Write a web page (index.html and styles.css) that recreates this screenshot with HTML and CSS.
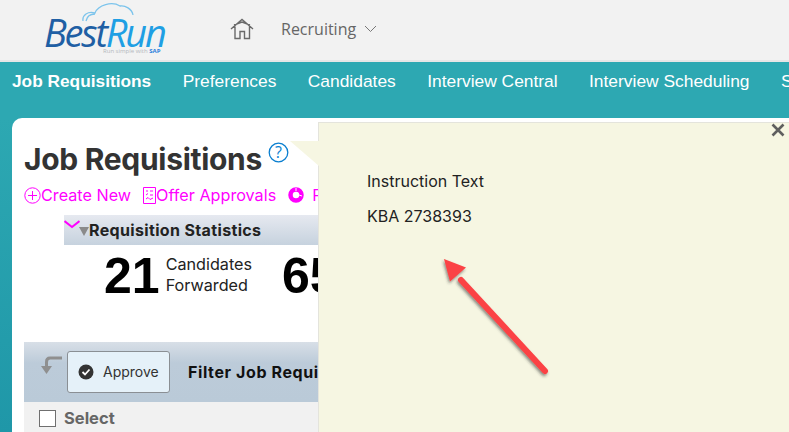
FILE: index.html
```html
<!DOCTYPE html>
<html lang="en">
<head>
<meta charset="utf-8">
<title>Job Requisitions</title>
<link rel="stylesheet" href="styles.css">
</head>
<body>
<header class="topbar">
  <div class="logo">
    <svg class="logo-cloud" width="64" height="24" viewBox="0 0 64 24"><path d="M1 20C0 14 6 10 13 12C16 4 30 0 38 5C43 4 50 8 51 14M4 20C5 15 8 13 13 13" fill="none" stroke="#7cc4ec" stroke-width="1.300"/></svg>
    <span class="logo-word"><span class="logo-best">Best</span><span class="logo-run">Run</span></span>
    <span class="logo-tag">Run simple with <b class="logo-sap">SAP</b></span>
  </div>
  <svg class="home" width="24" height="22" viewBox="0 0 24 22"><path d="M1 11L12 1.500L23 11M5 8.500V20.500H10V13.500H14.500V20.500H19.500V8.500M4 7L12 4L20 7" fill="none" stroke="#6a6a6a" stroke-width="1.400"/></svg>
  <span class="module">Recruiting</span>
  <svg class="chev" width="13" height="8" viewBox="0 0 13 8"><path d="M1 1L6.500 6.500L12 1" fill="none" stroke="#777" stroke-width="1"/></svg>
</header>
<nav class="tabs">
  <span class="tab tab-active">Job Requisitions</span>
  <span class="tab">Preferences</span>
  <span class="tab">Candidates</span>
  <span class="tab">Interview Central</span>
  <span class="tab">Interview Scheduling</span>
  <span class="tab">Settings</span>
</nav>
<main class="stage">
  <section class="card">
    <div class="title-row">
      <h1 class="title">Job Requisitions</h1>
      <svg class="help" width="21" height="21" viewBox="0 0 21 21"><circle cx="10.500" cy="10.500" r="9.300" fill="none" stroke="#0a7fd0" stroke-width="1.300"/><text x="10.500" y="15.500" text-anchor="middle" class="help-q">?</text></svg>
    </div>
    <div class="actions">
      <span class="action"><svg class="action-plus" width="17" height="17" viewBox="0 0 17 17"><circle cx="8.500" cy="8.500" r="7.700" fill="none" stroke="#f0f" stroke-width="1"/><path d="M8.500 4V13M4 8.500H13" stroke="#f0f" stroke-width="1"/></svg>Create New</span>
      <span class="action"><svg class="action-offer" width="13" height="17" viewBox="0 0 13 17"><path d="M.5 .5H12.500V16.500H.5ZM3 4H5M7 4H10M3 8L5 6.500M7 8H10M3 12L5 10.500L7 12.500L10 11" fill="none" stroke="#f0f" stroke-width="1"/></svg>Offer Approvals</span>
      <span class="action action-third"><svg width="16" height="16" viewBox="0 0 16 16"><circle cx="8" cy="8" r="5.500" fill="none" stroke="#f0f" stroke-width="4.500"/><path d="M8 1V4M14 9L11 8" stroke="#fff" stroke-width="1"/></svg>Position</span>
    </div>
    <div class="stats-head">
      <svg class="stats-chev" width="16" height="9" viewBox="0 0 16 9"><path d="M.5 1L8 7L15.500 1" fill="none" stroke="#f0f" stroke-width="2"/></svg>
      <span class="stats-tri"></span>
      <span class="stats-label">Requisition Statistics</span>
    </div>
    <div class="stats">
      <div class="stat">
        <span class="stat-num">21</span>
        <span class="stat-text">Candidates<br>Forwarded</span>
      </div>
      <div class="stat">
        <span class="stat-num">65</span>
        <span class="stat-text">Candidates<br>Hired</span>
      </div>
    </div>
    <div class="toolbar">
      <svg class="back" width="22" height="20" viewBox="0 0 22 20"><path d="M21 2H9C6.500 2 5.500 3.500 5.500 6V11" fill="none" stroke="#8f8f8f" stroke-width="3"/><path d="M0 10H11L5.500 18Z" fill="#8f8f8f"/></svg>
      <button class="approve" type="button">
        <svg width="16" height="16" viewBox="0 0 16 16"><circle cx="8" cy="8" r="7.500" fill="#333"/><path d="M4.500 8L7 10.500L11.500 5.500" fill="none" stroke="#fff" stroke-width="1.800"/></svg>
        Approve
      </button>
      <span class="filter">Filter Job Requisitions</span>
    </div>
    <div class="select-row">
      <span class="checkbox"></span>
      <span class="select-label">Select</span>
    </div>
  </section>
  <aside class="popup">
    <span class="popup-tail"></span>
    <svg class="popup-close" width="14" height="14" viewBox="0 0 14 14"><path d="M1.500 1.500L12.500 12.500M12.500 1.500L1.500 12.500" stroke="#5f5f5f" stroke-width="2.600"/></svg>
    <p class="popup-text">Instruction Text</p>
    <p class="popup-text">KBA 2738393</p>
    <svg class="arrow" width="120" height="130" viewBox="0 0 120 130">
      <defs><filter id="shadow" x="-20%" y="-20%" width="140%" height="140%"><feDropShadow dx="-1" dy="2" stdDeviation="1.800" flood-color="#333" flood-opacity=".55"/></filter></defs>
      <g filter="url(#shadow)">
        <path d="M20 21L104 112" stroke="#fb4245" stroke-width="6" stroke-linecap="round" fill="none"/>
        <path d="M3 0L25 8.500L9 22.500Z" fill="#fb4245"/>
      </g>
    </svg>
  </aside>
</main>
</body>
</html>
```
FILE: styles.css
```css
* { box-sizing: border-box; }
html, body { margin: 0; height: 100%; }
body {
  width: 789px;
  height: 432px;
  overflow: hidden;
  background: #fff;
  font-family: "Liberation Sans", Arial, sans-serif;
}
.topbar {
  height: 62px;
  display: flex;
  align-items: center;
  padding: 0 0 2px 45px;
  background: #f2f2f2;
  border-bottom: 2px solid #e6e6e6;
}
.logo { position: relative; width: 120px; height: 56px; flex: none; }
.logo-cloud { position: absolute; left: 37px; top: 0; }
.logo-word {
  position: absolute;
  left: -1px;
  top: 16px;
  display: flex;
  font: italic 400 38px/30px "Open Sans", sans-serif;
  letter-spacing: -2.200px;
  white-space: nowrap;
}
.logo-best { display: block; color: #1f5fa4; }
.logo-run { display: block; color: #1f9fe4; }
.logo-tag {
  position: absolute;
  left: 58px;
  top: 47px;
  font: 400 6px/7px "Open Sans", sans-serif;
  color: #b4b8bd;
  white-space: nowrap;
}
.logo-sap { color: #2a7fdc; }
.home { margin-left: 65px; flex: none; }
.module {
  margin-left: 27px;
  font: 400 16px/22px "Open Sans", sans-serif;
  color: #666;
}
.chev { margin-left: 8px; flex: none; }
.tabs {
  height: 56px;
  display: flex;
  gap: 31.400px;
  padding: 8px 0 0 12px;
  background: #2da8b2;
  overflow: hidden;
  white-space: nowrap;
  font-size: 17.400px;
  line-height: 22px;
  color: #fff;
}
.tab { flex: none; }
.tab-active { font-weight: 700; font-size: 17.300px; }
.stage {
  position: relative;
  height: 314px;
  padding-left: 12px;
  background: linear-gradient(180deg, #2da8b2 0%, #1f97a8 100%);
}
.card {
  height: 314px;
  padding: 22px 0 0 12px;
  background: #fff;
  border-radius: 10px 0 0 0;
  overflow: hidden;
}
.title-row { display: flex; align-items: flex-start; height: 40px; }
.title {
  margin: 0;
  font: 700 30px/38px "Inter", sans-serif;
  color: #333;
  letter-spacing: -.3px;
}
.help { margin: 2px 0 0 6px; flex: none; }
.help-q { font: 400 16px "Open Sans", sans-serif; fill: #0a7fd0; }
.actions {
  display: flex;
  gap: 12px;
  height: 24px;
  margin-top: 3px;
  font: 400 16.200px/24px "Inter", sans-serif;
  color: #f0f;
  white-space: nowrap;
}
.action { display: flex; align-items: center; }
.action-plus { margin-right: 0; }
.action-offer { margin-right: 0; }
.action-third svg { margin-right: 8px; }
.stats-head {
  display: flex;
  align-items: center;
  width: 300px;
  height: 30px;
  margin: 8px 0 0 40px;
  background: linear-gradient(180deg, #e6e9f0 0%, #c6d2de 100%);
  position: relative;
}
.stats-chev { position: absolute; left: 0; top: 5px; }
.stats-tri {
  margin: 3px 0 0 15px;
  border-left: 5px solid transparent;
  border-right: 5px solid transparent;
  border-top: 9px solid #8a8a8a;
}
.stats-label {
  font: 700 16px/20px "Inter", sans-serif;
  letter-spacing: .35px;
  color: #222;
}
.stats { display: flex; gap: 30px; height: 97px; padding: 4px 0 0 80px; white-space: nowrap; }
.stat { display: flex; align-items: flex-start; gap: 6px; }
.stat-num { font: 700 50px/54px "Liberation Sans", sans-serif; color: #000; }
.stat-text { font: 400 16.200px/21px "Inter", sans-serif; color: #222; padding-top: 5px; }
.toolbar {
  display: flex;
  align-items: center;
  height: 60px;
  background: linear-gradient(180deg, #d8dfe7 0%, #bccbd9 35%, #bacad8 100%);
  padding: 0 0 0 17px;
  white-space: nowrap;
}
.back { flex: none; margin-top: -12px; }
.approve {
  display: flex;
  align-items: center;
  gap: 9px;
  width: 103px;
  height: 42px;
  margin-left: 4px;
  padding: 0 0 0 10px;
  background: #e5f1f9;
  border: 1px solid #8a8f94;
  border-radius: 3px;
  font: 400 14px/20px "Inter", sans-serif;
  color: #333;
}
.filter {
  margin-left: 18px;
  font: 700 16px/20px "Inter", sans-serif;
  letter-spacing: .6px;
  color: #111;
}
.select-row {
  display: flex;
  align-items: center;
  gap: 8px;
  height: 30px;
  padding: 2px 0 0 15px;
  background: #f1f1f1;
}
.checkbox { width: 17px; height: 17px; border: 1.500px solid #6f6f6f; background: #fff; }
.select-label { font: 700 16.500px/20px "Inter", sans-serif; color: #666; }
.popup {
  position: absolute;
  left: 318px;
  top: 4px;
  width: 471px;
  height: 310px;
  padding: 48px 0 0 48px;
  background: #f6f6e2;
  border: 1px solid #e4e4dc;
  border-right: 0;
  border-bottom: 0;
}
.popup-tail {
  position: absolute;
  left: -29px;
  top: 18px;
  width: 29px;
  height: 25px;
  background: #f6f6e2;
  clip-path: polygon(0 0, 100% 0, 100% 100%);
}
.popup-close { position: absolute; right: 4px; top: 0; }
.popup-text {
  margin: 0 0 14px;
  font: 400 16px/21px "Inter", sans-serif;
  color: #222;
}
.arrow { position: absolute; left: 122px; top: 136px; }
```
